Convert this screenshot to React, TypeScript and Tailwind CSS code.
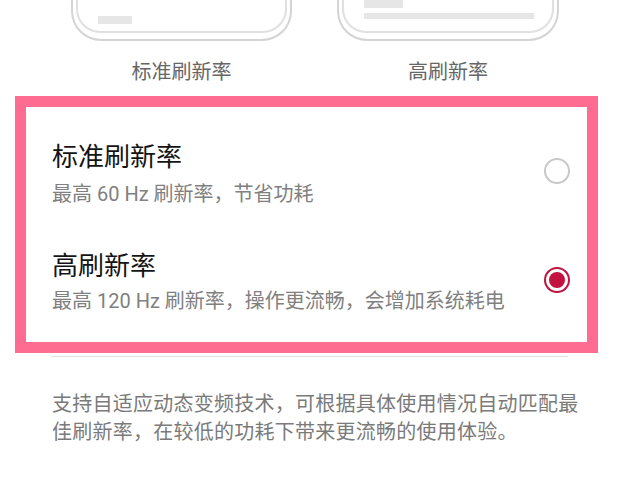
export default function App() {
  return (
    <div
      className="bg-white w-[619px] h-[497px] overflow-hidden"
      style={{ fontFamily: '"Roboto", "Noto Sans CJK SC", sans-serif' }}
    >
      {/* Preview phones */}
      <div className="flex gap-[45px] pl-[71px]">
        <div className="w-[221px] flex flex-col items-center">
          <div className="w-full h-[41px] border-x-2 border-b-2 border-[#d4d4d4] rounded-b-[30px] px-[3px] pb-[6px]">
            <div className="h-full border-x-2 border-b-2 border-[#e0e0e0] rounded-b-[24px] pl-[20px] pt-[16px]">
              <div className="w-[34px] h-[8px] bg-[#e6e6e6]" />
            </div>
          </div>
          <span className="mt-[17px] text-[20px] leading-[28px] text-[#666666]">标准刷新率</span>
        </div>
        <div className="w-[222px] flex flex-col items-center">
          <div className="w-full h-[41px] border-x-2 border-b-2 border-[#d4d4d4] rounded-b-[30px] px-[3px] pb-[6px]">
            <div className="h-full border-x-2 border-b-2 border-[#e0e0e0] rounded-b-[24px] pl-[20px]">
              <div className="w-[39px] h-[8px] bg-[#e6e6e6]" />
              <div className="mt-[5px] w-[170px] h-[6px] bg-[#e6e6e6]" />
            </div>
          </div>
          <span className="mt-[17px] text-[20px] leading-[28px] text-[#666666]">高刷新率</span>
        </div>
      </div>

      {/* Highlighted options */}
      <div className="mx-[15px] mt-[10px] w-[583px] border-[11px] border-[#ff6c92] pt-[34px] pb-[27px] pl-[26px] pr-[17px]">
        <div className="flex items-center">
          <div className="flex-1">
            <div className="text-[26px] leading-[32px] text-[#141414]">标准刷新率</div>
            <div className="mt-[7px] text-[20px] leading-[28px] text-[#808080]">最高 60 Hz 刷新率，节省功耗</div>
          </div>
          <div className="w-[26px] h-[26px] rounded-full border-2 border-[#c8c8c8] -mt-[7px]" />
        </div>
        <div className="flex items-center mt-[42px]">
          <div className="flex-1">
            <div className="text-[26px] leading-[32px] text-[#141414]">高刷新率</div>
            <div className="mt-[5px] text-[20px] leading-[28px] text-[#808080]">最高 120 Hz 刷新率，操作更流畅，会增加系统耗电</div>
          </div>
          <div className="w-[26px] h-[26px] rounded-full border-[2.5px] border-[#c2123f] flex items-center justify-center -mt-[6px]">
            <div className="w-[16px] h-[16px] rounded-full bg-[#c2123f]" />
          </div>
        </div>
      </div>

      <div className="mx-[51px] mt-[3px] h-px bg-[#e2e2e2]" />

      <p className="ml-[52px] mt-[33px] w-[534px] text-[20px] leading-[28px] tracking-[0.25px] text-[#7a7a7a]">
        支持自适应动态变频技术，可根据具体使用情况自动匹配最佳刷新率，在较低的功耗下带来更流畅的使用体验。
      </p>
    </div>
  );
}
